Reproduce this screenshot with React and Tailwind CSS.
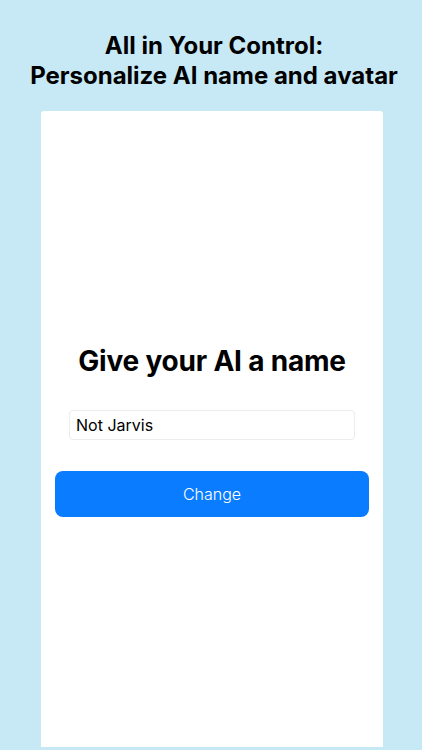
import React from 'react';

const App = () => {
  return (
    <div
      className="w-[422px] h-[750px] overflow-hidden bg-[#c7e9f5] flex flex-col"
      style={{ fontFamily: 'Inter, "Liberation Sans", sans-serif' }}
    >
      <h1 className="mt-[31px] pl-[6px] text-center text-[24px] leading-[30px] font-bold text-black tracking-[0px]">
        All in Your Control:
        <br />
        Personalize AI name and avatar
      </h1>
      <div className="mt-[20px] ml-[41px] w-[342px] h-[636px] shrink-0 bg-white rounded-t-[3px] flex flex-col items-center">
        <h2 className="mt-[231px] text-[28px] leading-[38px] font-bold text-black tracking-[-0.2px]">
          Give your AI a name
        </h2>
        <div className="mt-[30px] w-[286px] h-[30px] border border-[#ececec] rounded-[4px] flex items-center px-[6px]">
          <span className="text-[16px] text-black">Not Jarvis</span>
        </div>
        <button className="mt-[31px] w-[314px] h-[46px] rounded-[8px] bg-[#0a7cff] text-white text-[16px] font-light">
          Change
        </button>
      </div>
    </div>
  );
};

export default App;
